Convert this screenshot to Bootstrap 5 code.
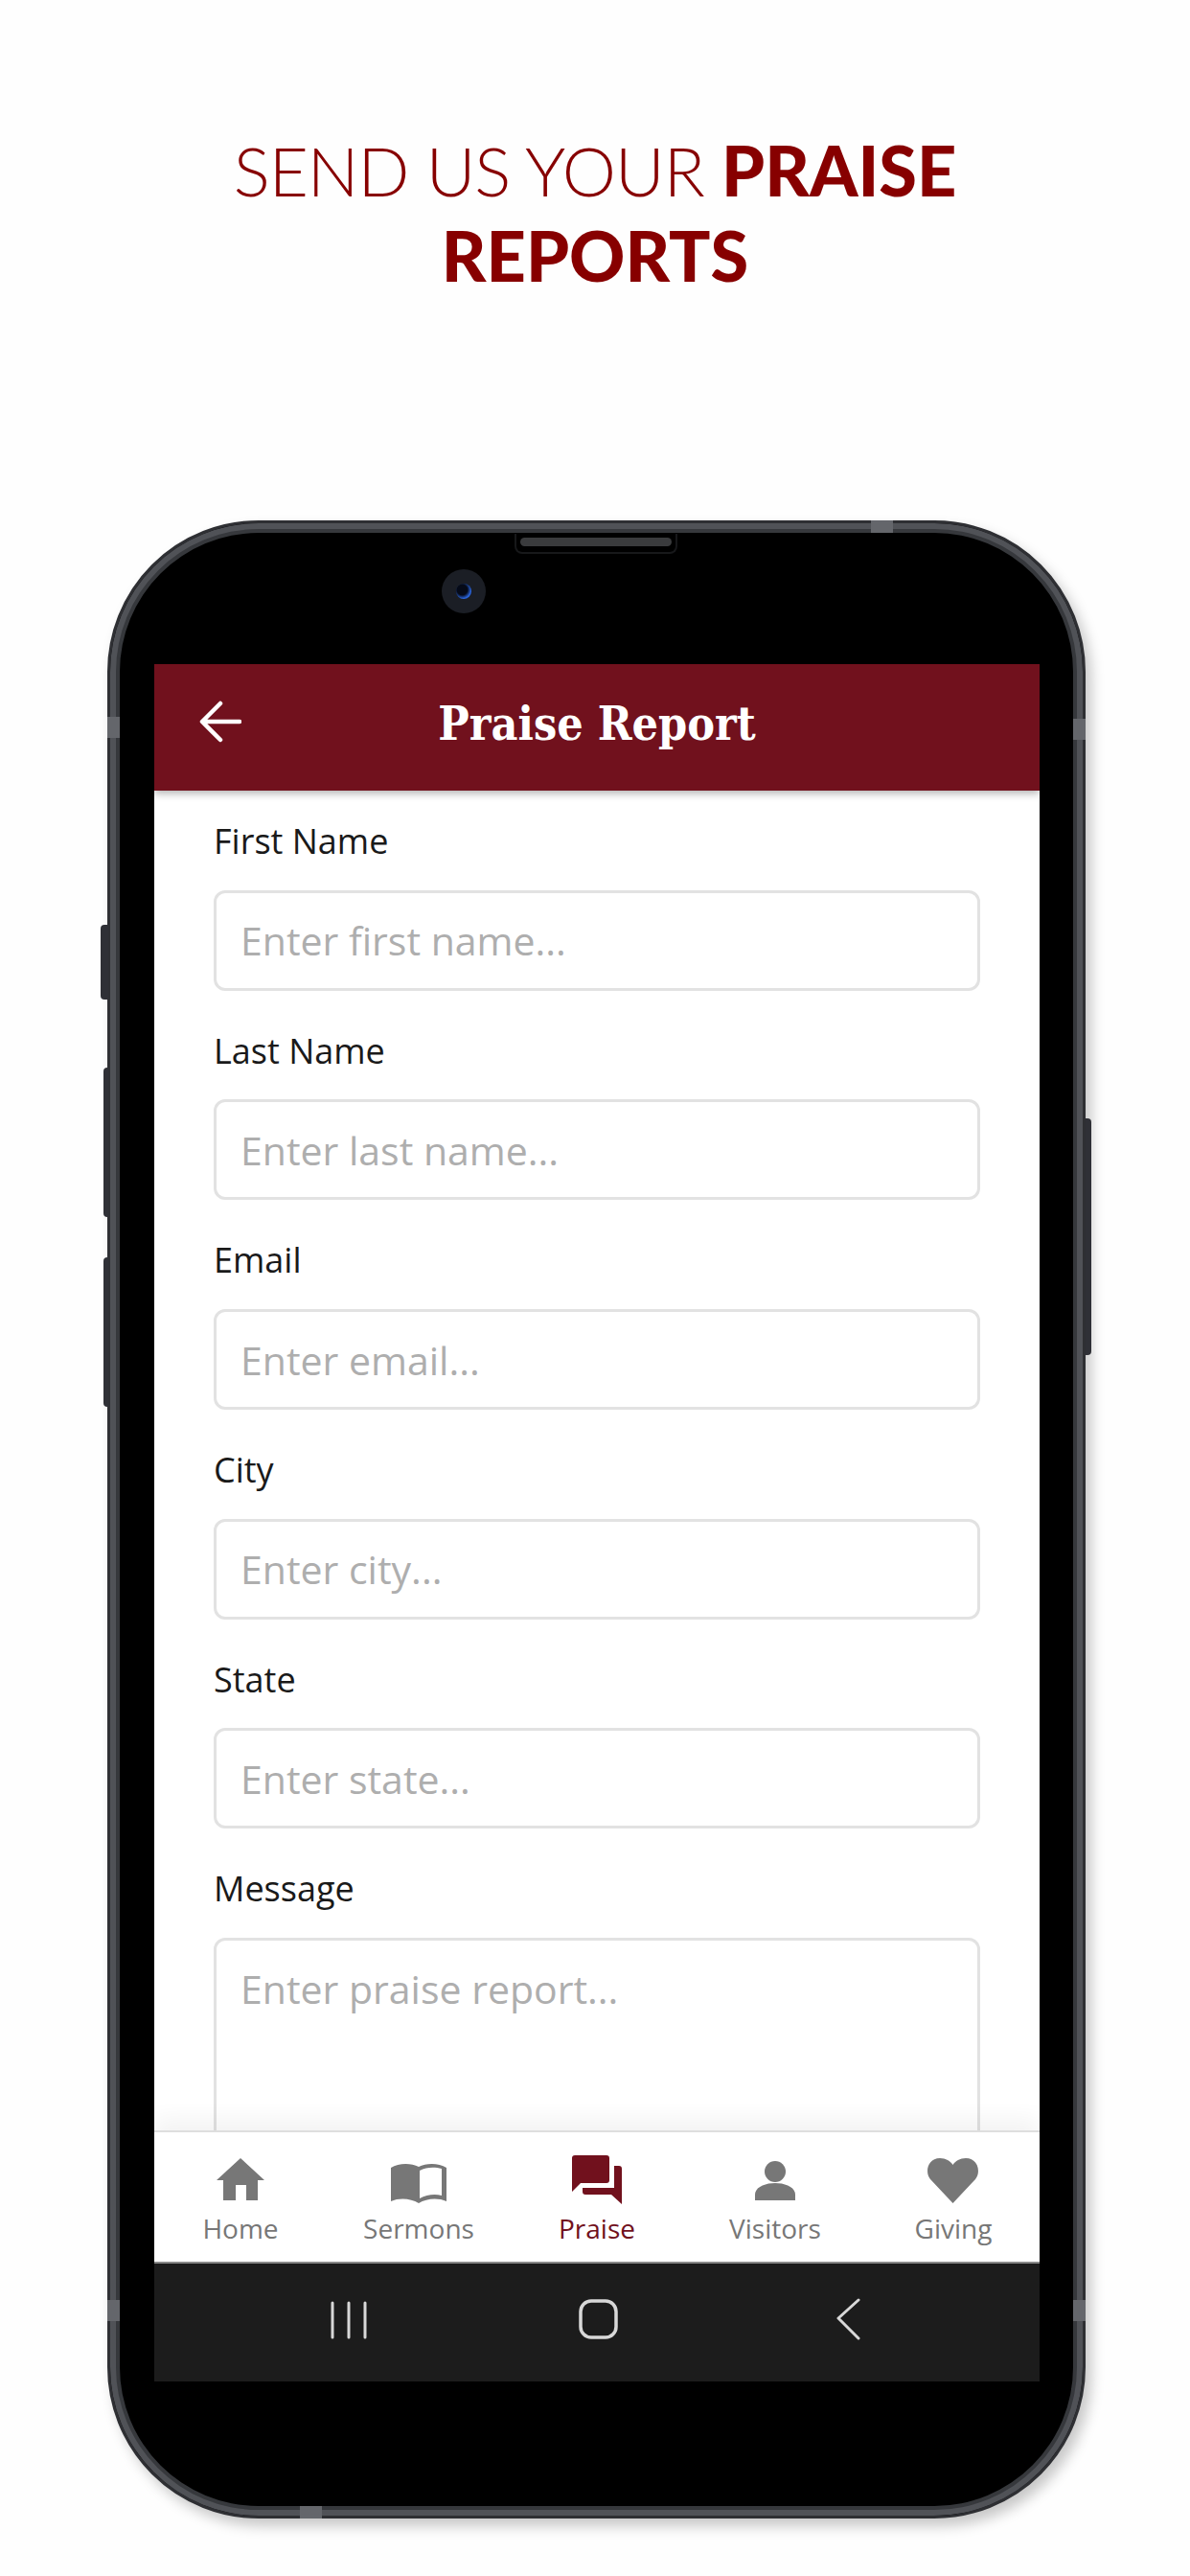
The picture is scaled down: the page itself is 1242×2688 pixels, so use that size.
<!DOCTYPE html>
<html lang="en">
<head>
<meta charset="UTF-8">
<meta name="viewport" content="width=device-width, initial-scale=1.0">
<title>Praise Report</title>
<link href="https://cdn.jsdelivr.net/npm/bootstrap@5.3.0/dist/css/bootstrap.min.css" rel="stylesheet">
<style>
    body { background: #fefefe; margin: 0; width: 1242px; height: 2688px; overflow: hidden; }

    /* Headline */
    .promo-head { height: 543px; padding-top: 133px; }
    .promo-head h1 { font-family: "Lato", sans-serif; font-weight: 300; font-size: 71px; line-height: 89px; color: #870000; text-align: center; margin: 0; width: 900px; margin-left: 171px; letter-spacing: -1px; }
    .promo-head b { font-weight: 900; font-size: 72px; letter-spacing: 0; }

    /* Phone */
    .phone-body { position: relative; width: 1021px; height: 2085px; margin-left: 112px; padding: 147px 35px 121px 46px; background: #000; border: 3px solid #2e2f33; border-radius: 158px; box-shadow: inset 0 0 0 6px #505257, inset 0 0 0 10px #36383c, 6px 8px 14px rgba(0,0,0,.22); }
    .side-key { position: absolute; background: #2f3036; border-radius: 4px 0 0 4px; }
    .side-key.key-1 { top: 419px; height: 78px; width: 8px; left: -10px; }
    .side-key.key-2 { top: 568px; height: 156px; width: 5px; left: -7px; }
    .side-key.key-3 { top: 766px; height: 156px; width: 5px; left: -7px; }
    .side-key.key-r { top: 621px; height: 247px; width: 6px; right: -9px; border-radius: 0 4px 4px 0; }
    .band { position: absolute; background: #64666b; }
    .band-t { top: -3px; left: 794px; width: 23px; height: 13px; }
    .band-b { bottom: -3px; left: 198px; width: 23px; height: 13px; }
    .band-l1 { left: -3px; top: 202px; width: 13px; height: 22px; }
    .band-r1 { right: -3px; top: 204px; width: 13px; height: 22px; }
    .band-l2 { left: -3px; top: 1854px; width: 13px; height: 22px; }
    .band-r2 { right: -3px; top: 1854px; width: 13px; height: 22px; }
    .speaker { position: absolute; top: 11px; left: 422px; width: 170px; height: 21px; background: #000; border: 2px solid #17181a; border-top: 0; border-radius: 0 0 8px 8px; padding: 4px; }
    .speaker span { display: block; height: 9px; border-radius: 5px; background: #3a3b3d; }
    .cam { position: absolute; top: 48px; left: 346px; width: 46px; height: 46px; border-radius: 50%; background: #1b1e25; }
    .cam::after { content: ""; position: absolute; left: 15px; top: 15px; width: 16px; height: 16px; border-radius: 50%; background: radial-gradient(circle at 40% 40%, #050a18 40%, #2a66e0 68%, #123a90 100%); }

    /* Screen */
    .app-screen { width: 924px; height: 1792px; background: #fff; overflow: hidden; }
    .app-bar { height: 132px; background: #71111d; color: #fff; position: relative; z-index: 2; box-shadow: 0 3px 8px rgba(0,0,0,.3); }
    .app-bar svg { position: absolute; left: 47px; top: 38px; }
    .app-bar h2 { font-family: "DejaVu Serif Condensed", "DejaVu Serif", serif; font-weight: 700; font-size: 48px; line-height: 124px; margin: 0; text-align: center; }
    .form-area { height: 1398px; overflow: hidden; padding: 28px 62px 0 62px; }
    .field-label { font-family: "Open Sans", sans-serif; font-size: 36px; line-height: 50px; color: #1a1a1a; margin: 0 0 25.7px 0; display: block; }
    .field-wrap { margin-bottom: 38px; }
    .form-area .form-control { font-family: "Open Sans", sans-serif; font-size: 41px; height: 105px; padding: 0 25px; border: 3px solid #e2e2e2; border-radius: 12px; color: #333; box-shadow: none; }
    .form-area .form-control::placeholder { color: #aeaeae; opacity: 1; }
    .form-area textarea.form-control { height: 300px; padding-top: 20px; resize: none; }
    .tab-bar { height: 139px; background: #fff; border-top: 2px solid #dedede; border-bottom: 2px solid #8a8a8a; position: relative; box-shadow: 0 -12px 22px rgba(0,0,0,.05); display: grid; grid-template-columns: repeat(5, 186px); justify-content: center; }
    .tab-item { color: #777; font-family: "Open Sans", sans-serif; font-size: 28px; line-height: 40px; padding-top: 22px; }
    .tab-item svg { display: block; margin-bottom: 2px; }
    .tab-item.on { color: #71111d; }
    .sys-bar { height: 123px; background: #1c1c1c; position: relative; }
    .sys-bar svg { position: absolute; }
    .sys-menu { left: 183px; top: 38px; }
    .sys-home { left: 442px; top: 36px; }
    .sys-back { left: 711px; top: 36px; }
</style>
</head>
<body>
    <div class="promo-head">
        <h1>SEND US YOUR <b>PRAISE</b> <b>REPORTS</b></h1>
    </div>

    <div class="phone-body">
        <div class="side-key key-1"></div>
        <div class="side-key key-2"></div>
        <div class="side-key key-3"></div>
        <div class="side-key key-r"></div>
        <div class="band band-t"></div>
        <div class="band band-b"></div>
        <div class="band band-l1"></div>
        <div class="band band-r1"></div>
        <div class="band band-l2"></div>
        <div class="band band-r2"></div>
        <div class="speaker"><span></span></div>
        <div class="cam"></div>

        <div class="app-screen d-flex flex-column">
            <div class="app-bar">
                <svg width="44" height="44" viewBox="0 0 44 44" fill="none" stroke="#fff" stroke-width="4.5" stroke-linecap="round" stroke-linejoin="round"><path d="M42 22H4M22 3 3 22l19 19"/></svg>
                <h2>Praise Report</h2>
            </div>

            <form class="form-area">
                <div class="field-wrap">
                    <label class="field-label" for="firstName">First Name</label>
                    <input class="form-control" id="firstName" type="text" placeholder="Enter first name...">
                </div>
                <div class="field-wrap">
                    <label class="field-label" for="lastName">Last Name</label>
                    <input class="form-control" id="lastName" type="text" placeholder="Enter last name...">
                </div>
                <div class="field-wrap">
                    <label class="field-label" for="email">Email</label>
                    <input class="form-control" id="email" type="text" placeholder="Enter email...">
                </div>
                <div class="field-wrap">
                    <label class="field-label" for="city">City</label>
                    <input class="form-control" id="city" type="text" placeholder="Enter city...">
                </div>
                <div class="field-wrap">
                    <label class="field-label" for="state">State</label>
                    <input class="form-control" id="state" type="text" placeholder="Enter state...">
                </div>
                <div class="field-wrap">
                    <label class="field-label" for="message">Message</label>
                    <textarea class="form-control" id="message" placeholder="Enter praise report..."></textarea>
                </div>
            </form>

            <div class="tab-bar">
                <div class="tab-item d-flex flex-column align-items-center">
                    <svg width="60" height="56" viewBox="0 0 60 56" fill="#777"><path d="M30 5 55 28H48V49H36V33H25V49H12V28H5Z"/></svg>
                    Home
                </div>
                <div class="tab-item d-flex flex-column align-items-center">
                    <svg width="60" height="56" viewBox="0 0 60 56" fill="#777"><path fill-rule="evenodd" d="M1 15C9 10 22 10 30 14 38 10 51 10 59 15V50C50 46 38 47 30 52 22 47 10 46 1 50ZM31 18V47C38 43 47 42 54 44V16C47 14 38 14 31 18Z"/></svg>
                    Sermons
                </div>
                <div class="tab-item on d-flex flex-column align-items-center">
                    <svg width="60" height="56" viewBox="0 0 60 56" fill="#71111d"><path d="M7 2H40a3 3 0 0 1 3 3V28a3 3 0 0 1-3 3H13L4 40V5a3 3 0 0 1 3-3Z"/><path d="M48 13H53a3 3 0 0 1 3 3V53L45 43H18a3 3 0 0 1-3-3V36H48Z"/></svg>
                    Praise
                </div>
                <div class="tab-item d-flex flex-column align-items-center">
                    <svg width="60" height="56" viewBox="0 0 60 56" fill="#777"><circle cx="30" cy="19" r="11"/><path d="M9 49V43C9 35 20 31 30 31 40 31 51 35 51 43V49Z"/></svg>
                    Visitors
                </div>
                <div class="tab-item d-flex flex-column align-items-center">
                    <svg width="60" height="56" viewBox="0 0 60 56" fill="#777"><path d="M29.5 52 6 27C0 20 3 5 16 5 22 5 27 8 29.5 12 32 8 37 5 43 5 56 5 59 20 53 27Z"/></svg>
                    Giving
                </div>
            </div>

            <div class="sys-bar">
                <svg class="sys-menu" width="42" height="42" viewBox="0 0 42 42" fill="none" stroke="#d8d8d8" stroke-width="3" stroke-linecap="round"><path d="M3 3V39M20 3V39M37 3V39"/></svg>
                <svg class="sys-home" width="44" height="44" viewBox="0 0 44 44" fill="none" stroke="#d8d8d8" stroke-width="3.5"><rect x="3" y="3" width="37" height="38" rx="11"/></svg>
                <svg class="sys-back" width="28" height="44" viewBox="0 0 28 44" fill="none" stroke="#d8d8d8" stroke-width="3" stroke-linecap="round" stroke-linejoin="round"><path d="M24 2 3 21l21 21"/></svg>
            </div>
        </div>
    </div>

    <script src="https://cdn.jsdelivr.net/npm/bootstrap@5.3.0/dist/js/bootstrap.bundle.min.js"></script>
</body>
</html>
